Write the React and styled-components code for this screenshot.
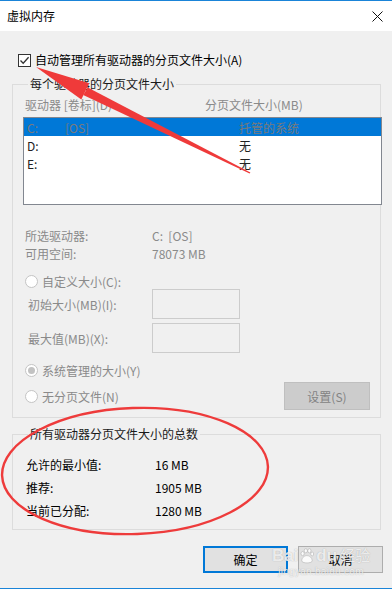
import React from "react";
import styled, { createGlobalStyle } from "styled-components";

const GlobalStyle = createGlobalStyle`
  html, body {
    margin: 0;
    padding: 0;
    background: #f0f0f0;
  }
  * {
    box-sizing: border-box;
  }
`;

const Window = styled.div`
  position: relative;
  width: 392px;
  height: 589px;
  display: flex;
  flex-direction: column;
  border-top: 1px solid #1a84d8;
  border-bottom: 1px solid #1a84d8;
  background: #f0f0f0;
  font-family: "Noto Sans CJK SC", "Noto Sans", sans-serif;
  font-size: 12px;
  color: #000;
  overflow: hidden;
`;

const TitleBar = styled.div`
  height: 30px;
  display: flex;
  align-items: center;
  justify-content: space-between;
  padding: 0 9px 0 7px;
  background: #fff;
  line-height: 16px;
`;

const Body = styled.div`
  flex: 1;
  display: flex;
  flex-direction: column;
  padding-top: 21px;
`;

const CheckRow = styled.label`
  display: flex;
  align-items: center;
  gap: 4px;
  height: 16px;
  margin-left: 18px;
  line-height: 16px;
`;

const CheckBox = styled.span`
  width: 13px;
  height: 13px;
  border: 1px solid #333;
  background: #fff;
  display: flex;
  align-items: center;
  justify-content: center;
`;

const Group = styled.fieldset`
  margin: ${(p) => p.$top || 0}px 0 0 12px;
  width: 369px;
  min-width: 0;
  border: 1px solid #dcdcdc;
  padding: ${(p) => p.$pad || "3px 0 7px 10px"};
`;

const Legend = styled.legend`
  padding: 0 2px;
  margin-left: 5px;
  line-height: 16px;
  color: #1a1a1a;
`;

const HeaderRow = styled.div`
  display: flex;
  height: 18px;
  align-items: center;
  padding-left: 2px;
  color: #8a8a8a;
`;

const HeaderCell = styled.span`
  width: ${(p) => p.$w}px;
`;

const ListBox = styled.div`
  margin-top: 4px;
  height: 88px;
  width: 359px;
  border: 1px solid #828790;
  background: #fff;
  padding: 0;
`;

const ListRow = styled.div`
  display: flex;
  align-items: center;
  height: 18px;
  padding-left: 3px;
  background: ${(p) => (p.$sel ? "#0078d7" : "transparent")};
  color: ${(p) => (p.$sel ? "#7a7a7a" : "#222")};
`;

const Cell = styled.span`
  width: ${(p) => p.$w}px;
  flex-shrink: 0;
`;

const InfoList = styled.div`
  margin-top: 21px;
  display: flex;
  flex-direction: column;
  color: #8a8a8a;
`;

const InfoRow = styled.div`
  display: flex;
  align-items: center;
  height: 18px;
  padding-left: 2px;
`;

const InfoLabel = styled.span`
  width: 127px;
`;

const RadioRow = styled.div`
  display: flex;
  align-items: center;
  gap: 4px;
  height: ${(p) => p.$h || 18}px;
  margin-top: ${(p) => p.$top || 0}px;
  padding-left: 2px;
  color: #8a8a8a;
`;

const Radio = styled.span`
  width: 13px;
  height: 13px;
  border-radius: 50%;
  border: 1px solid #c4c4c4;
  background: #fff;
  display: flex;
  align-items: center;
  justify-content: center;

  &::after {
    content: "";
    width: 7px;
    height: 7px;
    border-radius: 50%;
    background: ${(p) => (p.$on ? "#c2c2c2" : "transparent")};
  }
`;

const SizeRow = styled.div`
  display: flex;
  align-items: center;
  height: 30px;
  margin-top: ${(p) => p.$top || 0}px;
  padding-left: 5px;
  color: #8a8a8a;
`;

const SizeLabel = styled.span`
  width: 124px;
`;

const SizeInput = styled.span`
  width: 88px;
  height: 30px;
  border: 1px solid #cccccc;
  background: #f0f0f0;
`;

const BottomRow = styled.div`
  display: flex;
  align-items: center;
  justify-content: space-between;
  height: 28px;
  margin-top: 3px;
  padding-right: 10px;
`;

const DimButton = styled.span`
  width: 86px;
  height: 28px;
  display: flex;
  align-items: center;
  justify-content: center;
  background: #cccccc;
  border: 1px solid #bfbfbf;
  color: #838383;
`;

const TotalRow = styled.div`
  display: flex;
  align-items: center;
  height: 23px;
  padding-left: 3px;
`;

const TotalLabel = styled.span`
  width: 129px;
`;

const Footer = styled.div`
  display: flex;
  justify-content: flex-end;
  gap: 10px;
  margin-top: 16px;
  padding-right: 9px;
`;

const Button = styled.span`
  width: ${(p) => p.$w || 85}px;
  height: 27px;
  display: flex;
  align-items: center;
  justify-content: center;
  background: #e1e1e1;
  border: ${(p) => (p.$primary ? "2px solid #0078d7" : "1px solid #adadad")};
`;

const Overlay = styled.svg`
  position: absolute;
  left: 0;
  top: 0;
  pointer-events: none;
`;

const Watermark = styled.div`
  position: absolute;
  left: 273px;
  top: 545px;
  width: 96px;
  display: flex;
  flex-direction: column;
  align-items: center;
  white-space: nowrap;
  color: rgba(255, 255, 255, 0.8);
  text-shadow: 0 0 1px rgba(110, 110, 110, 0.55);
  pointer-events: none;
  font-family: "Liberation Sans", "Noto Sans CJK SC", sans-serif;
`;

const MarkTop = styled.div`
  display: flex;
  align-items: center;
  gap: 1px;
  font-size: 17px;
  font-weight: bold;
  line-height: 20px;
`;

const MarkWord = styled.span`
  font-weight: normal;
  font-size: 15px;
  margin-left: 2px;
`;

const MarkSub = styled.div`
  font-size: 10px;
  line-height: 12px;
  letter-spacing: 0.3px;
`;

const drives = [
  { d: "C:", label: "[OS]", size: "托管的系统", sel: true },
  { d: "D:", label: "", size: "无" },
  { d: "E:", label: "", size: "无" },
];

export default function App() {
  return (
    <Window>
      <GlobalStyle />
      <TitleBar>
        <span>虚拟内存</span>
        <svg width="11" height="11" viewBox="0 0 11 11">
          <path d="M0.5 0.5 L10.5 10.5 M10.5 0.5 L0.5 10.5" stroke="#111" strokeWidth="1" />
        </svg>
      </TitleBar>

      <Body>
        <CheckRow>
          <CheckBox>
            <svg width="11" height="11" viewBox="0 0 11 11">
              <path d="M1.5 5.5 L4.2 8.3 L9.6 2.3" stroke="#333" strokeWidth="1.3" fill="none" />
            </svg>
          </CheckBox>
          <span>自动管理所有驱动器的分页文件大小(A)</span>
        </CheckRow>

        <Group $top={8}>
          <Legend>每个驱动器的分页文件大小</Legend>
          <HeaderRow>
            <HeaderCell $w={180}>驱动器 [卷标](D)</HeaderCell>
            <HeaderCell $w={160}>分页文件大小(MB)</HeaderCell>
          </HeaderRow>
          <ListBox>
            {drives.map((row, index) => (
              <ListRow key={index} $sel={row.sel}>
                <Cell $w={38}>{row.d}</Cell>
                <Cell $w={174}>{row.label}</Cell>
                <Cell $w={120}>{row.size}</Cell>
              </ListRow>
            ))}
          </ListBox>

          <InfoList>
            <InfoRow>
              <InfoLabel>所选驱动器:</InfoLabel>
              <span>C:&nbsp; [OS]</span>
            </InfoRow>
            <InfoRow>
              <InfoLabel>可用空间:</InfoLabel>
              <span>78073 MB</span>
            </InfoRow>
          </InfoList>

          <RadioRow $top={11} $h={16}>
            <Radio />
            <span>自定义大小(C):</span>
          </RadioRow>
          <SizeRow>
            <SizeLabel>初始大小(MB)(I):</SizeLabel>
            <SizeInput />
          </SizeRow>
          <SizeRow $top={4}>
            <SizeLabel>最大值(MB)(X):</SizeLabel>
            <SizeInput />
          </SizeRow>
          <RadioRow $top={8}>
            <Radio $on />
            <span>系统管理的大小(Y)</span>
          </RadioRow>
          <BottomRow>
            <RadioRow>
              <Radio />
              <span>无分页文件(N)</span>
            </RadioRow>
            <DimButton>设置(S)</DimButton>
          </BottomRow>
        </Group>

        <Group $top={8} $pad="11px 0 7px 10px">
          <Legend>所有驱动器分页文件大小的总数</Legend>
          <TotalRow>
            <TotalLabel>允许的最小值:</TotalLabel>
            <span>16 MB</span>
          </TotalRow>
          <TotalRow>
            <TotalLabel>推荐:</TotalLabel>
            <span>1905 MB</span>
          </TotalRow>
          <TotalRow>
            <TotalLabel>当前已分配:</TotalLabel>
            <span>1280 MB</span>
          </TotalRow>
        </Group>

        <Footer>
          <Button $primary $w={85}>确定</Button>
          <Button $w={85}>取消</Button>
        </Footer>
      </Body>

      <Watermark>
        <MarkTop>
          <span>Bai</span>
          <svg width="16" height="16" viewBox="0 0 20 20">
            <g fill="rgba(255,255,255,0.85)" stroke="rgba(140,140,140,0.55)" strokeWidth="0.8">
              <ellipse cx="4.5" cy="7" rx="2" ry="2.6" />
              <ellipse cx="8.5" cy="3.5" rx="2" ry="2.6" />
              <ellipse cx="13" cy="3.5" rx="2" ry="2.6" />
              <ellipse cx="16.5" cy="7.5" rx="1.8" ry="2.4" />
              <path d="M3.5 16 C3.5 11 8 9.5 10 9.5 C13 9.5 16.5 12 16.5 16 C16.5 19.5 3.5 19.5 3.5 16 Z" />
            </g>
          </svg>
          <span>du</span>
          <MarkWord>经验</MarkWord>
        </MarkTop>
        <MarkSub>jingyan.baidu.com</MarkSub>
      </Watermark>

      <Overlay width="392" height="589" viewBox="0 0 392 589">
        <polygon points="36,66 81.3,98.5 89.3,82.3" fill="#ef3a3a" />
        <polygon points="83.2,94 87.8,86.6 250.4,171.6 249.6,172.4" fill="#ef3a3a" />
        <ellipse
          cx="135"
          cy="470"
          rx="133"
          ry="63"
          fill="none"
          stroke="#ee3b3b"
          strokeWidth="2.4"
          transform="rotate(-2 135 470)"
        />
      </Overlay>
    </Window>
  );
}
